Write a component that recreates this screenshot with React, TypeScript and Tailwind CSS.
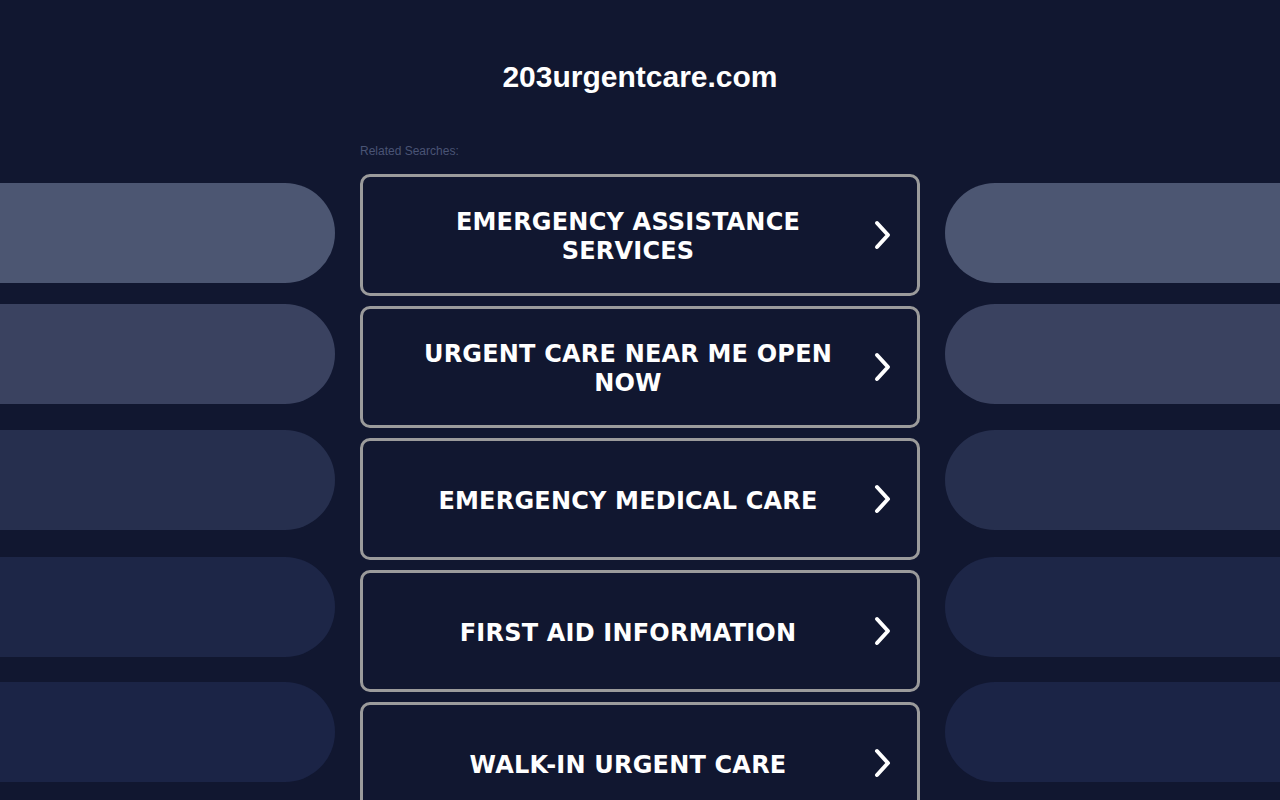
const searches = [
    "EMERGENCY ASSISTANCE SERVICES",
    "URGENT CARE NEAR ME OPEN NOW",
    "EMERGENCY MEDICAL CARE",
    "FIRST AID INFORMATION",
    "WALK-IN URGENT CARE",
];

const pills = [
    { color: "bg-[#4c5672]", gap: "mt-0" },
    { color: "bg-[#3a4260]", gap: "mt-[21px]" },
    { color: "bg-[#262f4e]", gap: "mt-[26px]" },
    { color: "bg-[#1d2647]", gap: "mt-[27px]" },
    { color: "bg-[#1b2446]", gap: "mt-[25px]" },
];

const Chevron = () => (
    <svg width="20" height="30" viewBox="0 0 20 30" fill="none">
        <polyline points="4,3 15,15 4,27" stroke="#ffffff" strokeWidth="4" strokeLinecap="round" strokeLinejoin="round" />
    </svg>
);

const SideColumn = ({ side }: { side: "left" | "right" }) => (
    <div className="flex-1 pt-[40px] flex flex-col">
        {pills.map((p, i) => (
            <div
                key={i}
                className={`${p.gap} ${p.color} h-[100px] ${side === "left" ? "rounded-r-full" : "rounded-l-full"}`}
            />
        ))}
    </div>
);

const App = () => {
    return (
        <div className="min-h-screen bg-[#111730] overflow-hidden pt-[60px] font-['Liberation_Sans',Arial,sans-serif]">
            <h1 className="text-center text-white text-[30px] leading-[34px] font-bold">
                203urgentcare.com
            </h1>

            <div className="flex mt-[49px]">
                <SideColumn side="left" />

                <div className="w-[560px] mx-[25px] shrink-0">
                    <p className="text-[12px] leading-[14px] pt-[1px] text-[#4a5475] mb-[16px]">Related Searches:</p>
                    <div className="flex flex-col gap-[10px]">
                        {searches.map((s) => (
                            <a
                                key={s}
                                href="#"
                                className="h-[122px] border-[3px] border-[#9b9b9b] rounded-[10px] flex items-center pl-[45px]"
                            >
                                <span className="w-[440px] pt-[4px] text-center text-white font-bold text-[24px] leading-[29px] tracking-[0.2px] font-['DejaVu_Sans',Verdana,sans-serif]">
                                    {s}
                                </span>
                                <span className="flex-1 flex justify-center">
                                    <Chevron />
                                </span>
                            </a>
                        ))}
                    </div>
                </div>

                <SideColumn side="right" />
            </div>
        </div>
    );
};

export default App;
